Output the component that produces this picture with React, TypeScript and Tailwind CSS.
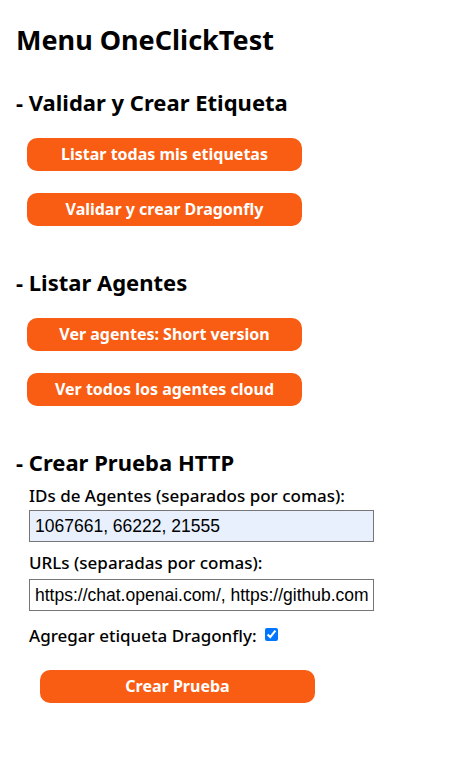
const font = { fontFamily: '"Noto Sans", "Open Sans", sans-serif' };
const inputFont = { fontFamily: '"Liberation Sans", Arial, sans-serif' };

const OrangeButton = ({ label, className = "" }: { label: string; className?: string }) => (
  <button
    type="button"
    className={`block w-[275px] h-[33px] rounded-[10px] bg-[#f85d13] text-white font-bold text-[16px] leading-[33px] text-center ${className}`}
  >
    {label}
  </button>
);

const App = () => {
  return (
    <div className="w-[456px] h-[783px] bg-white text-black px-4 pt-[23px]" style={font}>
      <h1 className="text-[27px] font-bold leading-[34px]">Menu OneClickTest</h1>

      <h2 className="mt-[32px] text-[22px] font-bold leading-[26px]">- Validar y Crear Etiqueta</h2>
      <div className="ml-[11px] mt-[23px] flex flex-col gap-[22px]">
        <OrangeButton label="Listar todas mis etiquetas" />
        <OrangeButton label="Validar y crear Dragonfly" />
      </div>

      <h2 className="mt-[43px] text-[22px] font-bold leading-[26px]">- Listar Agentes</h2>
      <div className="ml-[11px] mt-[23px] flex flex-col gap-[22px]">
        <OrangeButton label="Ver agentes: Short version" />
        <OrangeButton label="Ver todos los agentes cloud" />
      </div>

      <h2 className="mt-[43px] text-[22px] font-bold leading-[26px]">- Crear Prueba HTTP</h2>
      <form className="ml-[13px] mt-[10px] flex flex-col">
        <label htmlFor="ids" className="text-[17px] font-medium leading-[22px]">
          IDs de Agentes (separados por comas):
        </label>
        <input
          id="ids"
          type="text"
          defaultValue="1067661, 66222, 21555"
          className="mt-[3px] w-[345px] h-[32px] border border-[#767676] bg-[#e8f0fe] px-[5px] text-[17.5px] text-black"
          style={inputFont}
        />
        <label htmlFor="urls" className="mt-[10px] text-[17px] font-medium leading-[22px]">
          URLs (separadas por comas):
        </label>
        <input
          id="urls"
          type="text"
          defaultValue="https://chat.openai.com/, https://github.com/"
          className="mt-[5px] w-[345px] h-[32px] border border-[#767676] bg-white px-[5px] text-[17.5px] text-black"
          style={inputFont}
        />
        <div className="mt-[14px] flex items-center gap-[8px]">
          <label htmlFor="dragonfly" className="text-[17px] font-medium leading-[22px]">
            Agregar etiqueta Dragonfly:
          </label>
          <input id="dragonfly" type="checkbox" defaultChecked className="w-[13px] h-[13px] m-0 -mt-[3px]" />
        </div>
        <OrangeButton label="Crear Prueba" className="ml-[11px] mt-[23px]" />
      </form>
    </div>
  );
};

export default App;
